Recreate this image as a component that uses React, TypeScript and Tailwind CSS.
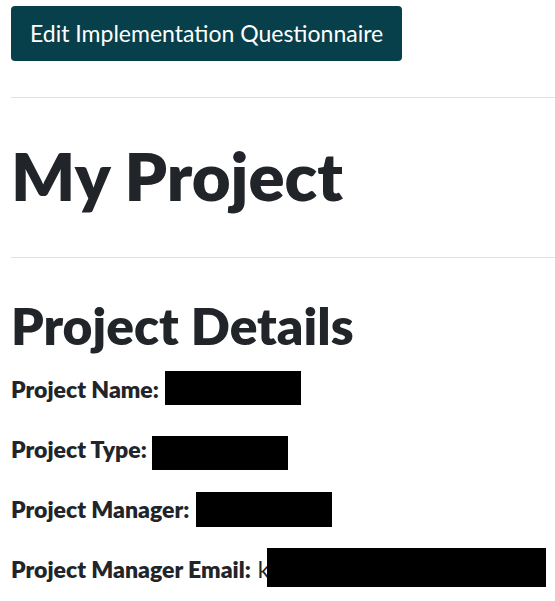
import React from "react";

const font = { fontFamily: "Lato, 'Open Sans', sans-serif" };

function Row({ label, labelW, boxW, boxH, boxTop, extra }: { label: string; labelW: number; boxW: number; boxH: number; boxTop: number; extra?: string }) {
  return (
    <div className="flex items-start h-[60px]">
      <div className="flex items-start pt-[8px] whitespace-nowrap shrink-0" style={{ width: labelW }}>
        <span className="text-[23px] font-extrabold text-[#212529] leading-[1.2]">{label}</span>
        {extra ? <span className="text-[23px] text-[#212529] leading-[1.2] ml-[7px]">{extra}</span> : null}
      </div>
      <span className="bg-black inline-block shrink-0" style={{ width: boxW, height: boxH, marginTop: boxTop }} />
    </div>
  );
}

export default function App() {
  return (
    <div className="w-[555px] h-[601px] overflow-hidden bg-white pl-[11px]" style={font}>
      <div className="pt-[6px]">
        <button className="h-[55px] px-[19px] rounded-[4px] bg-[#073f4a] text-white text-[23px] leading-none">
          Edit Implementation Questionnaire
        </button>
      </div>
      <div className="mt-[36px] border-t border-[#dee2e6]" />
      <h1 className="mt-[44px] text-[67px] font-extrabold leading-none text-[#212529]">My Project</h1>
      <div className="mt-[48px] border-t border-[#dee2e6]" />
      <h2 className="mt-[42px] text-[51.5px] font-extrabold leading-none text-[#212529]">Project Details</h2>
      <div className="mt-[16px] flex flex-col">
        <Row label="Project Name:" labelW={154} boxW={136} boxH={34} boxTop={3} />
        <Row label="Project Type:" labelW={141} boxW={136} boxH={34} boxTop={8} />
        <Row label="Project Manager:" labelW={185} boxW={136} boxH={35} boxTop={4} />
        <Row label="Project Manager Email:" labelW={256} boxW={279} boxH={39} boxTop={0} extra="k" />
      </div>
    </div>
  );
}
